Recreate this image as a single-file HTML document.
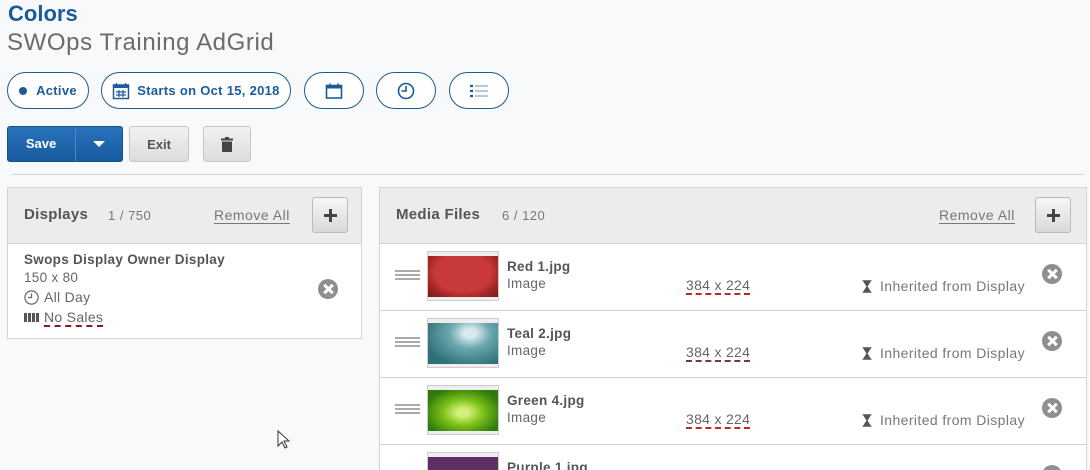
<!DOCTYPE html>
<html style="width:1090px;height:470px;overflow:hidden"><head><meta charset="utf-8"><style>
*{box-sizing:border-box;margin:0;padding:0}
body{width:1090px;height:470px;overflow:hidden;background:#f8f9fb;font-family:"Liberation Sans",sans-serif;position:relative;color:#666}
.a{position:absolute}
.pill{position:absolute;top:72px;height:37px;border:1.5px solid #1a5b9a;border-radius:19px;background:#fff;color:#1a5b9a;font-weight:bold;font-size:13px;letter-spacing:0.3px;display:flex;align-items:center;justify-content:center}
.btn{position:absolute;top:126px;height:36px;border:1px solid #c8c8c8;border-radius:3px;background:linear-gradient(#f2f2f2,#dcdcdc);display:flex;align-items:center;justify-content:center;font-weight:bold;font-size:13px;color:#555}
.panel{position:absolute;border:1px solid #d3d3d3;background:#fff;overflow:hidden}
.hdr{position:absolute;left:0;right:0;top:0;height:56px;background:#ececec;border-bottom:1px solid #d3d3d3}
.plus{position:absolute;top:9px;width:36px;height:36px;border:1px solid #bbb;border-radius:3px;background:linear-gradient(#f6f6f6,#d9d9d9)}
.plus:before{content:"";position:absolute;left:11px;top:16px;width:13px;height:3px;background:#444}
.plus:after{content:"";position:absolute;left:16px;top:11px;width:3px;height:13px;background:#444}
.x{position:absolute;width:20px;height:20px;border-radius:50%;background:#8f8f8f}
.x:before,.x:after{content:"";position:absolute;left:9px;top:4px;width:3px;height:12px;background:#fff;transform:rotate(45deg)}
.x:after{transform:rotate(-45deg)}
.row{position:absolute;left:0;right:0;height:67px;border-bottom:1px solid #d3d3d3}
.drag{position:absolute;left:15px;top:26px;width:25px;height:2px;background:#aaa;box-shadow:0 4px 0 #aaa,0 8px 0 #aaa}
.th{position:absolute;left:47px;top:7px;width:72px;height:50px;border:1px solid #ccc;background:#eee;padding:4px 0 3px}
.th div{width:100%;height:100%}
.nm{position:absolute;left:127px;top:15px;font-weight:bold;font-size:13.5px;letter-spacing:0.3px;color:#555}
.ty{position:absolute;left:127px;top:32px;font-size:13.5px;color:#666;letter-spacing:0.3px}
.sz{position:absolute;left:306px;top:34px;font-size:14px;color:#666;border-bottom:2px dashed #c0282d;line-height:15px;letter-spacing:0.3px}
.inh{position:absolute;left:482px;top:34px;font-size:14px;color:#777;letter-spacing:0.4px}
.hg{display:inline-block;width:10px;height:13px;vertical-align:-2px;margin-right:8px}
</style></head><body>
<div class="a" style="left:8px;top:1px;font-size:22px;font-weight:bold;color:#1a5b9a">Colors</div>
<div class="a" style="left:7px;top:29px;font-size:24px;color:#6b6b6b;letter-spacing:0.6px">SWOps Training AdGrid</div>

<div class="pill" style="left:7px;width:82px"><span style="width:8px;height:8px;border-radius:50%;background:#1a5b9a;margin-right:9px"></span>Active</div>
<div class="pill" style="left:101px;width:190px"><svg width="18" height="18" viewBox="0 0 18 18" style="margin-right:7px"><rect x="1.5" y="3" width="15" height="13.5" fill="none" stroke="#1a5b9a" stroke-width="1.5"/><rect x="1.5" y="3" width="15" height="3" fill="#1a5b9a"/><path d="M4.5 1v3M13.5 1v3M7 8v7M11 8v7M4 10h10M4 13h10" stroke="#1a5b9a" stroke-width="1.2"/></svg>Starts on Oct 15, 2018</div>
<div class="pill" style="left:304px;width:60px"><svg width="18" height="16" viewBox="0 0 18 16"><rect x="1.5" y="2.5" width="15" height="12.5" fill="none" stroke="#1a5b9a" stroke-width="1.6"/><rect x="1.5" y="2.5" width="15" height="3" fill="#1a5b9a"/><path d="M5 0.5v3M13 0.5v3" stroke="#1a5b9a" stroke-width="1.6"/></svg></div>
<div class="pill" style="left:376px;width:60px"><svg width="18" height="18" viewBox="0 0 18 18"><circle cx="9" cy="9" r="7.5" fill="none" stroke="#1a5b9a" stroke-width="1.6"/><path d="M9 4v5H4.5" fill="none" stroke="#1a5b9a" stroke-width="1.6"/></svg></div>
<div class="pill" style="left:449px;width:60px"><svg width="20" height="14" viewBox="0 0 20 14"><path d="M1 2h3M1 7h3M1 12h3" stroke="#1a5b9a" stroke-width="2.2"/><path d="M6 2h13M6 7h13M6 12h13" stroke="#8aa8c8" stroke-width="1.2"/></svg></div>

<div class="a" style="left:7px;top:126px;width:116px;height:36px;border-radius:3px;background:linear-gradient(#2a72bd,#175a9e);border:1px solid #14518f"></div>
<div class="a" style="left:75px;top:127px;width:1px;height:34px;background:#4b86c2"></div>
<div class="a" style="left:7px;top:136px;width:68px;text-align:center;color:#fff;font-weight:bold;font-size:13px">Save</div>
<div class="a" style="left:93px;top:141px;width:0;height:0;border-left:6px solid transparent;border-right:6px solid transparent;border-top:6px solid #fff"></div>
<div class="btn" style="left:129px;width:60px">Exit</div>
<div class="btn" style="left:203px;width:48px"><svg width="12" height="15" viewBox="0 0 12 15"><rect x="0" y="1.5" width="12" height="2" fill="#444"/><rect x="4" y="0" width="4" height="2" fill="#444"/><rect x="1" y="4.5" width="10" height="10.5" fill="#444"/></svg></div>

<div class="a" style="left:11px;top:174px;width:1072px;height:1px;background:#d5d5d5"></div>

<div class="panel" style="left:7px;top:187px;width:355px;height:152px">
 <div class="hdr"></div>
 <div class="a" style="left:16px;top:18px;font-weight:bold;font-size:15px;color:#555;letter-spacing:0.3px">Displays</div>
 <div class="a" style="left:100px;top:20px;font-size:13px;color:#777;letter-spacing:0.5px">1 / 750</div>
 <div class="a" style="left:206px;top:20px;font-size:14px;color:#777;border-bottom:1px solid #777;line-height:15px;letter-spacing:0.5px">Remove All</div>
 <div class="plus" style="left:304px"></div>
 <div class="a" style="left:16px;top:64px;font-weight:bold;font-size:13.5px;letter-spacing:0.3px;color:#555">Swops Display Owner Display</div>
 <div class="a" style="left:16px;top:82px;font-size:13.5px;color:#666;letter-spacing:0.3px">150 x 80</div>
 <div class="a" style="left:16px;top:101px;font-size:14px;color:#666;letter-spacing:0.3px"><svg width="15" height="15" viewBox="0 0 15 15" style="vertical-align:-3px;margin-right:5px"><circle cx="7.5" cy="7.5" r="6.6" fill="none" stroke="#666" stroke-width="1.2"/><path d="M7.5 3.5v4H4" fill="none" stroke="#666" stroke-width="1.2"/></svg>All Day</div>
 <div class="a" style="left:16px;top:121px;font-size:14px;color:#666;letter-spacing:0.3px"><span style="display:inline-block;width:16px;height:9px;background:repeating-linear-gradient(90deg,#555 0 3px,transparent 3px 4px);margin-right:4px;vertical-align:0"></span><span style="border-bottom:2px dashed #8a1a1a;line-height:14px">No Sales</span></div>
 <div class="x" style="left:310px;top:91px"></div>
</div>

<div class="panel" style="left:379px;top:187px;width:708px;height:283px;border-bottom:none">
 <div class="hdr"></div>
 <div class="a" style="left:16px;top:18px;font-weight:bold;font-size:15px;color:#555;letter-spacing:0.3px">Media Files</div>
 <div class="a" style="left:122px;top:20px;font-size:13px;color:#777;letter-spacing:0.5px">6 / 120</div>
 <div class="a" style="left:559px;top:20px;font-size:14px;color:#777;border-bottom:1px solid #777;line-height:15px;letter-spacing:0.5px">Remove All</div>
 <div class="plus" style="left:655px"></div>

 <div class="row" style="top:56px"><div class="drag"></div><div class="th"><div style="background:radial-gradient(ellipse at 50% 40%,#c83a3a 0 55%,#a42626 75%,#7a1a1a)"></div></div>
  <div class="nm">Red 1.jpg</div><div class="ty">Image</div><div class="sz">384 x 224</div>
  <div class="inh"><svg class="hg" viewBox="0 0 10 13"><path d="M0.5 0.7h9M0.5 12.3h9M1.5 1l7 0-3.5 5.5zM5 6.5l3.5 5.5h-7z" fill="#555" stroke="#555" stroke-width="1"/></svg>Inherited from Display</div>
  <div class="x" style="left:662px;top:20px"></div></div>
 <div class="row" style="top:123px"><div class="drag"></div><div class="th"><div style="background:radial-gradient(ellipse at 60% 25%,#d8eaee 0 10%,#6aa6ad 35%,#2f6f78 80%)"></div></div>
  <div class="nm">Teal 2.jpg</div><div class="ty">Image</div><div class="sz" style="border-color:#7a3060">384 x 224</div>
  <div class="inh"><svg class="hg" viewBox="0 0 10 13"><path d="M0.5 0.7h9M0.5 12.3h9M1.5 1l7 0-3.5 5.5zM5 6.5l3.5 5.5h-7z" fill="#555" stroke="#555" stroke-width="1"/></svg>Inherited from Display</div>
  <div class="x" style="left:662px;top:20px"></div></div>
 <div class="row" style="top:190px"><div class="drag"></div><div class="th"><div style="background:radial-gradient(ellipse at 50% 55%,#d4f07a 0 12%,#7ec21a 40%,#2f7a0c 80%)"></div></div>
  <div class="nm">Green 4.jpg</div><div class="ty">Image</div><div class="sz">384 x 224</div>
  <div class="inh"><svg class="hg" viewBox="0 0 10 13"><path d="M0.5 0.7h9M0.5 12.3h9M1.5 1l7 0-3.5 5.5zM5 6.5l3.5 5.5h-7z" fill="#555" stroke="#555" stroke-width="1"/></svg>Inherited from Display</div>
  <div class="x" style="left:662px;top:20px"></div></div>
 <div class="row" style="top:257px;border:none"><div class="drag"></div><div class="th"><div style="background:#5e2f62"></div></div>
  <div class="nm">Purple 1.jpg</div><div class="x" style="left:662px;top:20px"></div></div>
</div>

<svg class="a" style="left:277px;top:430px" width="13" height="20" viewBox="0 0 13 20"><path d="M1 1v15l4-4 3 6 2-1-3-6h5z" fill="#fff" stroke="#333" stroke-width="1"/></svg>
</body></html>
